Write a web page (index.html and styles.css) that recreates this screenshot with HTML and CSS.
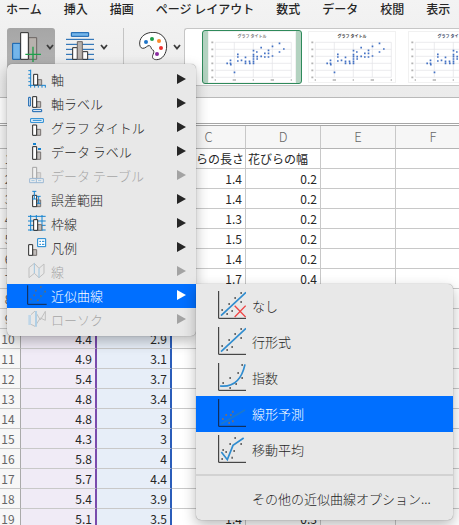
FILE: index.html
```html
<!DOCTYPE html>
<html lang="ja">
<head>
<meta charset="utf-8">
<title>近似曲線</title>
<link rel="stylesheet" href="styles.css">
</head>
<body>
<svg class="defs" aria-hidden="true">
  <defs>
    <symbol id="chart" viewBox="0 0 258 150">
      <rect width="258" height="150" fill="#fff"/>
      <path d="M19 31H247M19 52H247M19 73H247M19 94H247M19 115H247M19 136H247M19 31V136M76 31V136M133 31V136M190 31V136M247 31V136" stroke="#e2e2e6" stroke-width="2" fill="none"/>
      <path d="M7 31h6M7 52h6M7 73h6M7 94h6M7 115h6M7 136h6M17 144h4M71 144h10M131 144h4M185 144h10M245 144h4" stroke="#b4b4b4" stroke-width="5"/>
      <path d="M52 94h5M62 85h5M62 94h5M63 98h5M74 121h5M84 67h5M84 75h5M84 87h5M95 85h5M107 76h5M107 88h5M107 94h5M119 88h5M120 94h5M131 56h5M131 68h5M131 74h5M131 81h5M131 88h5M131 94h5M141 60h5M142 74h5M142 81h5M154 47h5M154 73h5M165 64h5M165 75h5M176 55h5M176 64h5M176 75h5M188 43h5M188 72h5M209 34h5M209 60h5M222 51h5" stroke="#4472c4" stroke-width="5"/>
    </symbol>
    <symbol id="chevron" viewBox="0 0 8 6"><path d="M1 1l3 3.500 3-3.500" fill="none" stroke="#3c3c3c" stroke-width="1.800"/></symbol>
    <symbol id="arrow" viewBox="0 0 9 10"><path d="M0 0l9 5-9 5z" fill="currentColor"/></symbol>
  </defs>
</svg>

<header class="ribbon">
  <nav class="tabs">
    <a href="#home">ホーム</a><a href="#insert">挿入</a><a href="#draw">描画</a><a href="#layout">ページ レイアウト</a><a href="#formula">数式</a><a href="#data">データ</a><a href="#review">校閲</a><a href="#view">表示</a>
  </nav>
  <div class="toolbar">
    <button class="tool tool-active" type="button" aria-label="グラフ要素を追加" aria-expanded="true">
      <svg class="icon-tool" viewBox="0 0 90 96"><g stroke-width="3"><path d="M2 34h23v48H2z" fill="#74b5ea" stroke="#0f5fae"/><path d="M50 17h24v65H50z" fill="#b8b2ae" stroke="#6b6462"/><path d="M26 2h23v80H26z" fill="#fff" stroke="#2b2b2b"/></g><path d="M40 67h47M63 44v46" stroke="#1e9e4a" stroke-width="4"/></svg>
      <svg class="chev"><use href="#chevron"/></svg>
    </button>
    <button class="tool" type="button" aria-label="クイック レイアウト">
      <svg class="icon-tool" viewBox="0 0 90 96"><path d="M0 22h84M0 37h84M0 52h84M0 67h84M0 82h84" stroke="#0f5fae" stroke-width="3"/><path d="M16 2h52v11H16z" fill="#74b5ea" stroke="#0f5fae" stroke-width="3"/><g stroke-width="3"><path d="M20 47h14v35H20zM50 59h15v23H50z" fill="#fff" stroke="#2b2b2b"/><path d="M34 29h15v53H34z" fill="#b8b2ae" stroke="#6b6462"/></g></svg>
      <svg class="chev"><use href="#chevron"/></svg>
    </button>
    <span class="divider"></span>
    <button class="tool" type="button" aria-label="色の変更">
      <svg class="icon-tool" viewBox="0 0 90 96"><path d="M2 33C3 12 22 1 42 1C66 1 83 18 83 42C83 64 71 83 53 83C42 83 38 77 42 68C46 60 45 54 40 53C35 51 38 43 31 41C25 39 20 50 11 49C4 48 2 41 2 33z" fill="#fff" stroke="#333" stroke-width="3"/><circle cx="21" cy="30" r="6" fill="#1f74c8"/><circle cx="39" cy="21" r="6" fill="#1e9e4a"/><circle cx="60" cy="27" r="6" fill="#fb8b2e"/><circle cx="66" cy="48" r="6" fill="#ee3030"/><circle cx="54" cy="66" r="6" fill="#8a2ba0"/></svg>
      <svg class="chev"><use href="#chevron"/></svg>
    </button>
    <div class="gallery">
      <button class="style style-on" type="button"><span class="thumb"><span class="thumb-title">グラフ タイトル</span><svg class="thumb-chart"><use href="#chart"/></svg></span></button>
      <button class="style" type="button"><span class="thumb"><span class="thumb-title thumb-dark">グラフ タイトル</span><svg class="thumb-chart"><use href="#chart"/></svg></span></button>
      <button class="style" type="button"><span class="thumb"><span class="thumb-title thumb-navy">グラフ タイトル</span><svg class="thumb-chart"><use href="#chart"/></svg></span></button>
    </div>
  </div>
</header>

<div class="formula"></div>

<main class="sheet">
  <table>
    <colgroup><col class="c-num"><col class="c-a"><col class="c-b"><col class="c-c"><col class="c-d"><col class="c-d"><col class="c-d"></colgroup>
    <thead><tr><th></th><th>A</th><th>B</th><th>C</th><th>D</th><th>E</th><th>F</th></tr></thead>
    <tbody>
      <tr class="names"><th>1</th><td></td><td></td><td>花びらの長さ</td><td>花びらの幅</td><td></td><td></td></tr>
      <tr><th>2</th><td>5.1</td><td>3.5</td><td>1.4</td><td>0.2</td><td></td><td></td></tr>
      <tr><th>3</th><td>4.9</td><td>3</td><td>1.4</td><td>0.2</td><td></td><td></td></tr>
      <tr><th>4</th><td>4.7</td><td>3.2</td><td>1.3</td><td>0.2</td><td></td><td></td></tr>
      <tr><th>5</th><td>4.6</td><td>3.1</td><td>1.5</td><td>0.2</td><td></td><td></td></tr>
      <tr><th>6</th><td>5</td><td>3.6</td><td>1.4</td><td>0.2</td><td></td><td></td></tr>
      <tr><th>7</th><td>5.4</td><td>3.9</td><td>1.7</td><td>0.4</td><td></td><td></td></tr>
      <tr><th>8</th><td>4.6</td><td>3.4</td><td>1.4</td><td>0.3</td><td></td><td></td></tr>
      <tr><th>9</th><td>5</td><td>3.4</td><td>1.5</td><td>0.2</td><td></td><td></td></tr>
      <tr><th>10</th><td>4.4</td><td>2.9</td><td>1.4</td><td>0.2</td><td></td><td></td></tr>
      <tr><th>11</th><td>4.9</td><td>3.1</td><td>1.5</td><td>0.1</td><td></td><td></td></tr>
      <tr><th>12</th><td>5.4</td><td>3.7</td><td>1.5</td><td>0.2</td><td></td><td></td></tr>
      <tr><th>13</th><td>4.8</td><td>3.4</td><td>1.6</td><td>0.2</td><td></td><td></td></tr>
      <tr><th>14</th><td>4.8</td><td>3</td><td>1.4</td><td>0.1</td><td></td><td></td></tr>
      <tr><th>15</th><td>4.3</td><td>3</td><td>1.1</td><td>0.1</td><td></td><td></td></tr>
      <tr><th>16</th><td>5.8</td><td>4</td><td>1.2</td><td>0.2</td><td></td><td></td></tr>
      <tr><th>17</th><td>5.7</td><td>4.4</td><td>1.5</td><td>0.4</td><td></td><td></td></tr>
      <tr><th>18</th><td>5.4</td><td>3.9</td><td>1.3</td><td>0.4</td><td></td><td></td></tr>
      <tr><th>19</th><td>5.1</td><td>3.5</td><td>1.4</td><td>0.3</td><td></td><td></td></tr>
    </tbody>
  </table>
</main>

<div class="menu menu-main" role="menu">
  <button class="item" role="menuitem"><svg class="ico" viewBox="0 0 60 72"><path d="M11 5v54M4 8h7M4 19h7M4 30h7M4 41h7M4 52h52M23 52v7M34 52v7M45 52v7M55 52v7" class="b"/><path d="M32 35h12v16H32z" class="g"/><path d="M20 19h12v32H20z" class="k"/></svg><span>軸</span><svg class="arrow"><use href="#arrow"/></svg></button>
  <button class="item" role="menuitem"><svg class="ico" viewBox="0 0 60 72"><path d="M5 16h5v26H5zM17 53h27v6H17z" class="n"/><path d="M29 29h12v17H29z" class="g"/><path d="M17 14h12v32H17z" class="k"/></svg><span>軸ラベル</span><svg class="arrow"><use href="#arrow"/></svg></button>
  <button class="item" role="menuitem"><svg class="ico" viewBox="0 0 60 72"><path d="M11 8h38v11H11z" class="w"/><path d="M17 13h27" class="b"/><path d="M29 40h12v18H29z" class="g"/><path d="M17 27h12v31H17z" class="k"/></svg><span>グラフ タイトル</span><svg class="arrow"><use href="#arrow"/></svg></button>
  <button class="item" role="menuitem"><svg class="ico" viewBox="0 0 60 72"><path d="M18 9h9v6h-9zM33 24h9v6h-9z" fill="#1583d0"/><path d="M29 36h12v22H29z" class="g"/><path d="M17 20h12v38H17z" class="k"/></svg><span>データ ラベル</span><svg class="arrow"><use href="#arrow"/></svg></button>
  <button class="item" role="menuitem" disabled><svg class="ico" viewBox="0 0 60 72"><path d="M29 26h12v17H29z" class="g"/><path d="M17 10h12v33H17z" class="k"/><path d="M8 44h41v12H8zM28 44v12" class="n"/><path d="M13 50h10M33 50h10" class="b"/></svg><span>データ テーブル</span><svg class="arrow"><use href="#arrow"/></svg></button>
  <button class="item" role="menuitem"><svg class="ico" viewBox="0 0 60 72"><path d="M29 36h12v20H29z" class="g"/><path d="M17 22h12v34H17z" class="k"/><path d="M16 10h12M22 10v23M16 33h12M29 25h12M35 25v21M29 46h12" class="b"/></svg><span>誤差範囲</span><svg class="arrow"><use href="#arrow"/></svg></button>
  <button class="item" role="menuitem"><svg class="ico" viewBox="0 0 60 72"><path d="M3 13h53M3 27h53M3 40h53M3 54h53M11 9v48M28 9v48M45 9v48" class="b"/><path d="M32 38h12v17H32z" class="g"/><path d="M20 23h12v32H20z" class="k"/></svg><span>枠線</span><svg class="arrow"><use href="#arrow"/></svg></button>
  <button class="item" role="menuitem"><svg class="ico" viewBox="0 0 60 72"><path d="M17 41h12v17H17z" class="g"/><path d="M5 26h12v32H5z" class="k"/><path d="M32 8h24v24H32z" class="w"/><path d="M37 16h5M45 16h7M37 25h5M45 25h7" class="b"/></svg><span>凡例</span><svg class="arrow"><use href="#arrow"/></svg></button>
  <button class="item" role="menuitem" disabled><svg class="ico" viewBox="0 0 60 72"><path d="M6 23L22 10 36 25 51 12M6 53L22 40 36 53 51 40M6 23v30M51 12v28" fill="none" stroke="#777" stroke-width="3"/><path d="M22 10v30M36 25v28" class="b"/></svg><span>線</span><svg class="arrow"><use href="#arrow"/></svg></button>
  <button class="item item-on" role="menuitem" aria-expanded="true"><svg class="ico" viewBox="0 0 60 72"><path d="M2 4v57h57" fill="none" stroke="#1b2a45" stroke-width="3"/><path d="M12 55Q46 53 54 16" fill="none" stroke="#0d78d8" stroke-width="3"/><path d="M39 9h5M24 20h5M19 34h5M9 46h5M39 36h5M52 23h5M30 49h5" stroke="#5f6a78" stroke-width="5"/></svg><span>近似曲線</span><svg class="arrow"><use href="#arrow"/></svg></button>
  <button class="item" role="menuitem" disabled><svg class="ico" viewBox="0 0 60 72"><path d="M4 21h8v30H4z" fill="#74b5ea"/><path d="M12 20L24 9 40 36 55 10V37L40 30M12 49l12 6 16-25" fill="none" stroke="#777" stroke-width="3"/><path d="M24 9h6v47h-6z" fill="#4aa3e0"/></svg><span>ローソク</span><svg class="arrow"><use href="#arrow"/></svg></button>
</div>

<div class="menu menu-sub" role="menu">
  <button class="entry" role="menuitem"><svg class="pic" viewBox="0 0 84 90"><path d="M9 74L84 4" class="line"/><path d="M10 57h5M31 39h5M49 21h5M67 6h5M67 33h5M40 60h5M25 69h5" class="dots"/><path d="M50 44l33 34M83 44L50 78" stroke="#ef4444" stroke-width="4"/><path d="M2 0v82h82" class="axis"/></svg><span>なし</span></button>
  <button class="entry" role="menuitem"><svg class="pic" viewBox="0 0 84 90"><path d="M9 74L84 4" class="line"/><path d="M10 57h5M31 39h5M49 21h5M67 6h5M67 33h5M40 60h5M25 69h5" class="dots"/><path d="M2 0v82h82" class="axis"/></svg><span>行形式</span></button>
  <button class="entry" role="menuitem"><svg class="pic" viewBox="0 0 84 90"><path d="M6 69C42 73 70 54 81 4" class="line"/><path d="M13 60h5M34 45h5M58 30h5M70 6h5M70 45h5M52 63h5M34 75h5" class="dots"/><path d="M2 0v82h82" class="axis"/></svg><span>指数</span></button>
  <button class="entry entry-on" role="menuitem"><svg class="pic" viewBox="0 0 84 90"><path d="M9 75L81 33" class="line"/><path d="M12 60h5M22 48h5M36 48h5M42 38h5M31 72h5M42 67h5" class="dots"/><path d="M2 0v82h82" class="axis"/></svg><span>線形予測</span></button>
  <button class="entry" role="menuitem"><svg class="pic" viewBox="0 0 84 90"><path d="M10 51L28 74 45 31 77 9" class="line"/><path d="M13 45h5M22 51h5M10 72h5M40 68h5M46 48h5M34 27h5M49 9h5M67 27h5" class="dots"/><path d="M2 0v82h82" class="axis"/></svg><span>移動平均</span></button>
  <hr>
  <button class="entry entry-more" role="menuitem"><span>その他の近似曲線オプション...</span></button>
</div>
</body>
</html>
```
FILE: styles.css
```css
* { box-sizing: border-box; }

body {
  margin: 0;
  min-height: 100vh;
  overflow: hidden;
  background: #fff;
  color: #262626;
  font-family: "Noto Sans CJK JP", sans-serif;
  font-size: 12px;
}

button {
  margin: 0;
  padding: 0;
  border: 0;
  background: none;
  color: inherit;
  font: inherit;
  text-align: left;
}

.defs { position: absolute; width: 0; height: 0; }

/* Ribbon */
.ribbon {
  height: 98px;
  border-bottom: 1px solid #b9b9b9;
  background: linear-gradient(#f3f3f3, #ebebeb);
}

.tabs {
  display: flex;
  gap: 22px;
  height: 28px;
  padding-left: 6px;
  line-height: 17px;
  font-weight: 500;
  white-space: nowrap;
}

.tabs a { flex: none; color: #262626; text-decoration: none; }

.toolbar { display: flex; height: 58px; }

.tool {
  display: flex;
  flex: none;
  align-items: flex-start;
  gap: 4px;
  width: 48px;
  margin-left: 7px;
  padding: 4px 0 0 5px;
}

.tool + .tool { margin-left: 6px; }
.tool-active { border-radius: 3px; background: linear-gradient(#a6a6a6, #b8b8b8); }
.icon-tool { width: 30px; height: 32px; }
.chev { width: 8px; height: 6px; margin-top: 12px; }

.divider {
  width: 1px;
  margin: 0 3px 0 14px;
  background: #c4c4c4;
}

.gallery {
  display: flex;
  flex: 1;
  min-width: 0;
  margin-left: 2px;
  padding: 1px 0 1px 17px;
  overflow: hidden;
  border: 1px solid #c6c6c6;
  border-right: 0;
  border-radius: 3px 0 0 0;
  background: #fff;
}

.style {
  flex: none;
  width: 100px;
  height: 54px;
  padding: 1px 6px;
  border: 1px solid transparent;
  border-radius: 3px;
}

.style-on { border-color: #2f8a5b; background: #b3d2c0; }
.thumb { display: grid; outline: 1px solid #f1f1f1; }
.thumb-chart { grid-area: 1 / 1; width: 86px; height: 50px; }

.thumb-title {
  z-index: 1;
  grid-area: 1 / 1;
  color: #777;
  font-size: 4px;
  font-weight: 700;
  line-height: 8px;
  text-align: center;
}

.thumb-dark { color: #333; }
.thumb-navy { color: #33415c; }

.formula {
  height: 28px;
  border-bottom: 3px double #a6a6a6;
  background: #fff;
}

/* Sheet */
.sheet { overflow: hidden; }

table {
  width: 471px;
  border-spacing: 0;
  table-layout: fixed;
}

.c-num { width: 21px; }
.c-a { width: 76px; }
.c-b, .c-d { width: 75px; }
.c-c { width: 74px; }

th, td {
  height: 20px;
  padding: 0 3px;
  overflow: hidden;
  border-right: 1px solid #c8c8c8;
  border-bottom: 1px solid #c8c8c8;
  line-height: 19px;
  text-align: right;
  white-space: nowrap;
}

thead th {
  height: 23px;
  border-bottom-color: #b4b4b4;
  background: #f6f6f6;
  color: #666;
  font-size: 13px;
  font-weight: 300;
  line-height: 22px;
  text-align: center;
}

tbody th {
  padding: 0 4px 0 0;
  border-right-color: #aaa;
  background: #f7f7f7;
  color: #666;
  font-weight: 400;
  text-align: center;
}

.names td { padding: 0 0 0 2px; text-align: left; }
.names td:nth-child(4) { padding: 0; }
td:nth-child(2) { border-right: 2px solid #7a4bac; background: #f0ebf6; }
td:nth-child(3) { border-right: 2px solid #2b5dba; background: #e7eef8; }

/* Menus */
.menu {
  position: absolute;
  padding: 4px 0;
  background: #e8e8e8;
  box-shadow: 0 0 1px rgba(0, 0, 0, 0.5), 0 5px 14px rgba(0, 0, 0, 0.28);
  font-size: 13px;
  font-weight: 300;
}

.menu-main {
  top: 64px;
  left: 7px;
  width: 189px;
  border-radius: 5px;
}

.menu-sub {
  top: 284px;
  left: 196px;
  width: 257px;
  border-radius: 0 5px 5px 5px;
}

.item {
  display: flex;
  align-items: center;
  gap: 4px;
  width: 100%;
  height: 24px;
  padding: 0 10px 0 20px;
  line-height: 24px;
}

.item:disabled { color: #262626; }
.item:disabled > * { opacity: 0.35; }
.item span { flex: 1; }
.item-on, .entry-on { background: #006fff; color: #fff; }
.ico { width: 20px; height: 24px; }
.arrow { align-self: flex-start; width: 9px; height: 10px; margin-top: 6px; }

.b { fill: none; stroke: #1583d0; stroke-width: 3; }
.n { fill: #fff; stroke: #0f5fae; stroke-width: 3; }
.w { fill: #fff; stroke: #1583d0; stroke-width: 3; }
.g { fill: #c0bcba; stroke: #787270; stroke-width: 3; }
.k { fill: #fff; stroke: #262626; stroke-width: 3; }

.entry {
  display: flex;
  align-items: center;
  gap: 6px;
  width: 100%;
  height: 36px;
  padding-left: 22px;
}

.entry span { padding-bottom: 2px; }
.pic { width: 28px; height: 30px; }
.axis { fill: none; stroke: #262626; stroke-width: 3; }
.line { fill: none; stroke: #2f8ccf; stroke-width: 5; }
.dots { fill: none; stroke: #6a6a6a; stroke-width: 6; }
.entry-on .axis { stroke: #14233f; }
.entry-on .line { stroke: #1c78cc; }
.entry-on .dots { stroke: #756e72; }

.menu hr {
  height: 2px;
  margin: 6px 0;
  border: 0;
  background: #d2d2d2;
}

.entry-more { height: 34px; padding-left: 56px; }
```
